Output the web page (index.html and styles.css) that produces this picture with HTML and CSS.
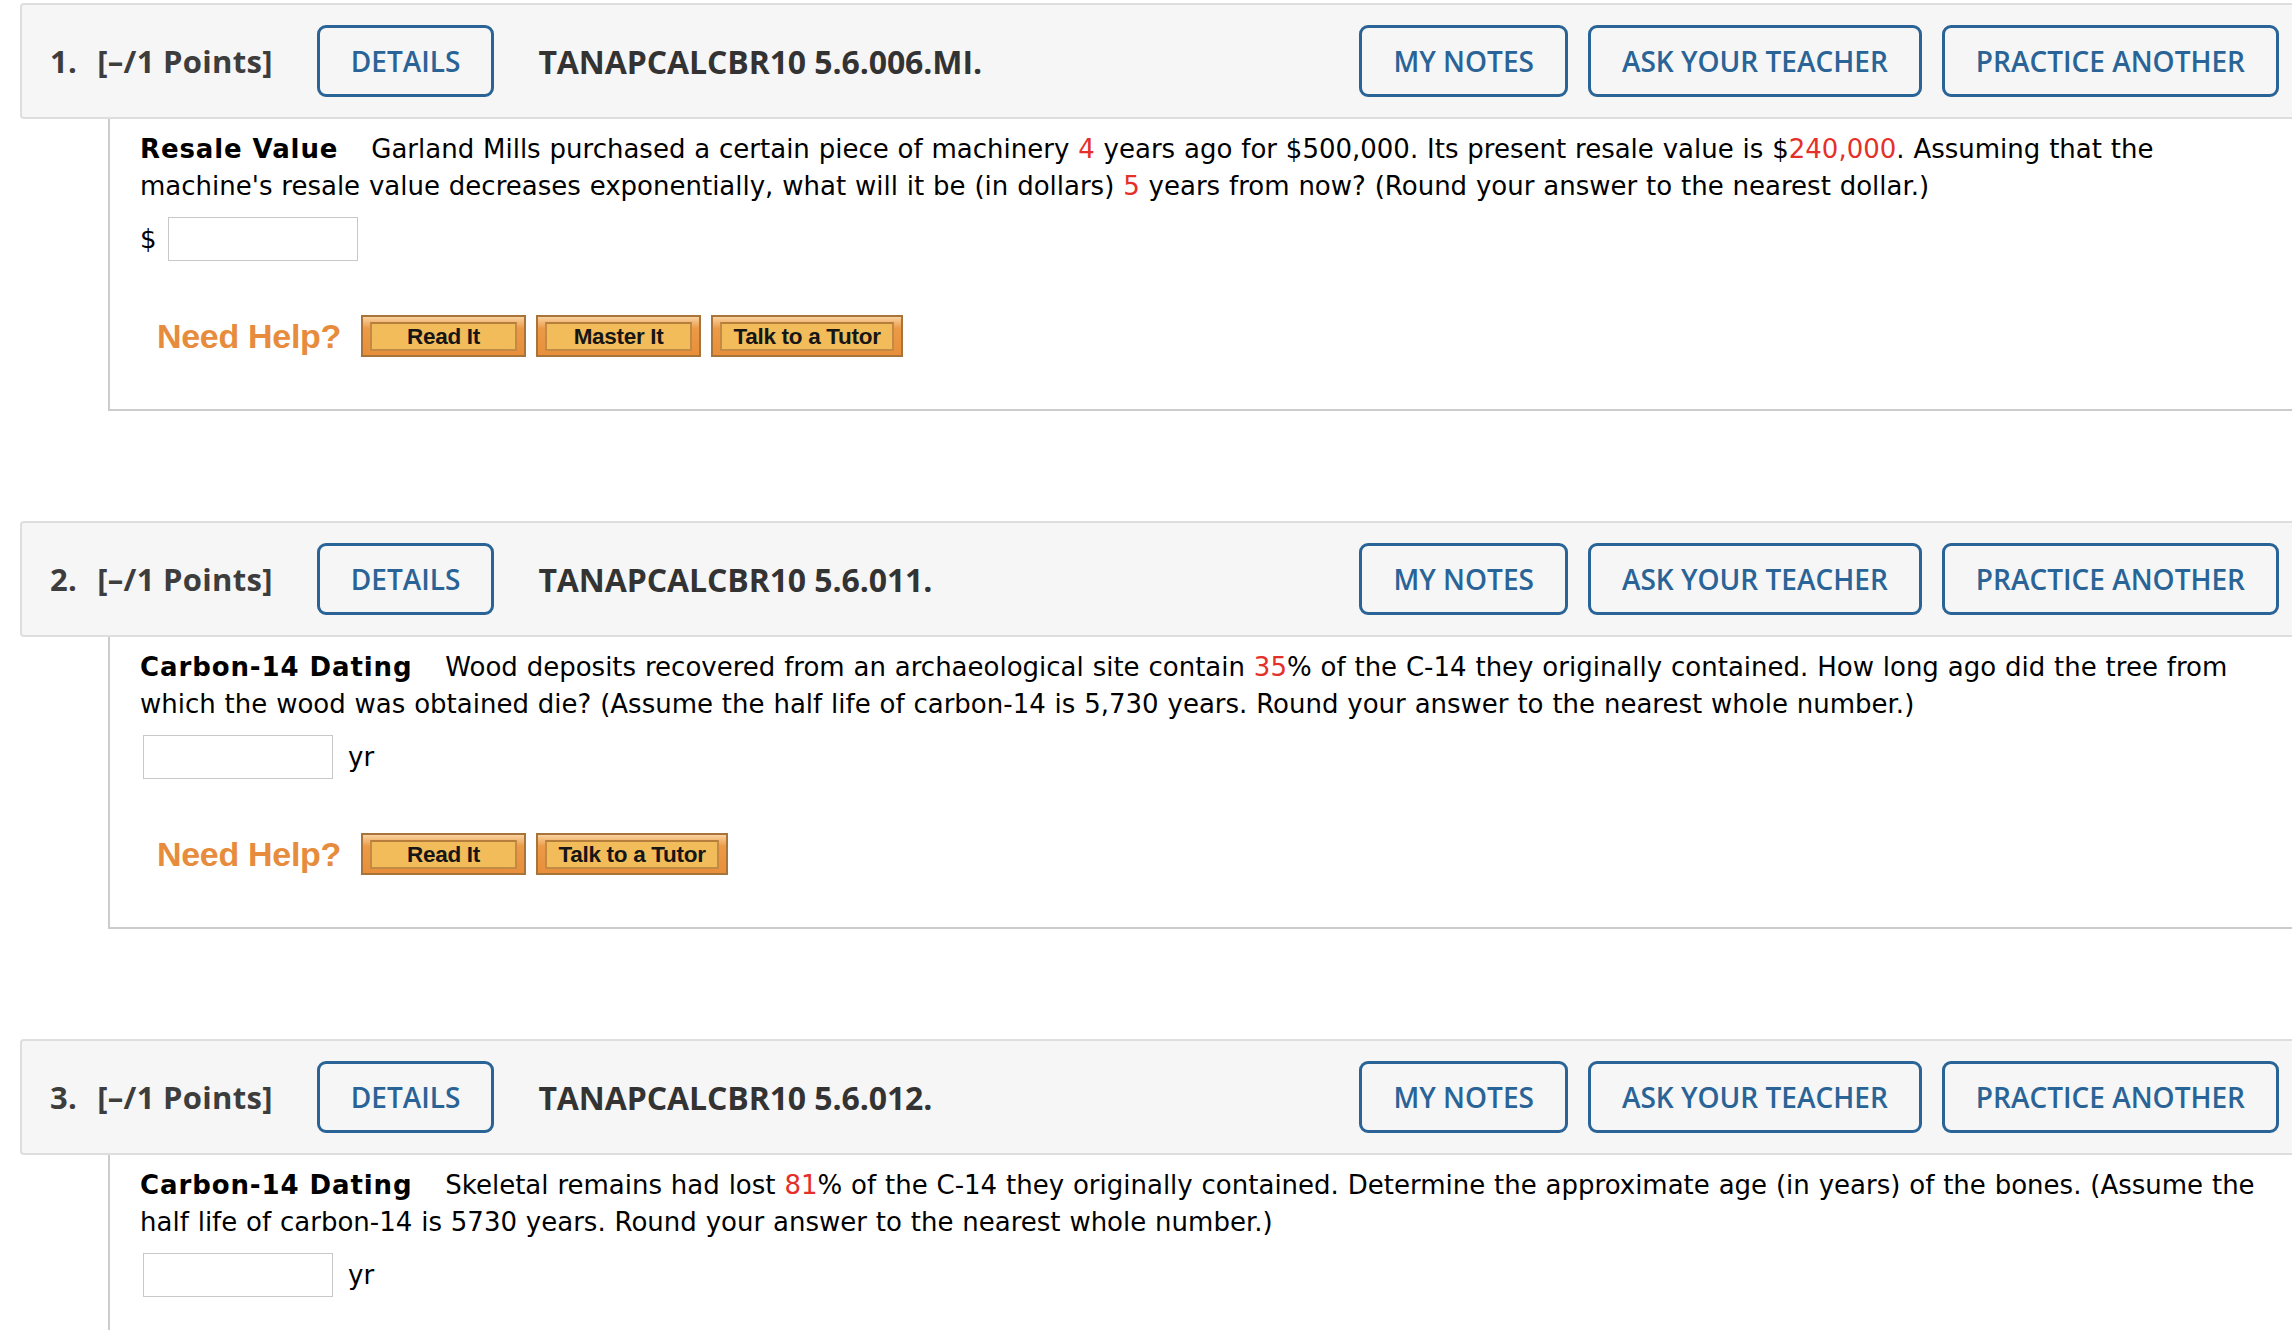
FILE: index.html
```html
<!DOCTYPE html>
<html lang="en">
<head>
<meta charset="utf-8">
<title>Questions</title>
<link rel="stylesheet" href="styles.css">
</head>
<body>
<div class="page">

  <section class="question">
    <div class="q-header">
      <div class="q-label"><span class="q-num">1.</span><span>[–/1 Points]</span></div>
      <button class="q-btn q-details">DETAILS</button>
      <div class="q-title">TANAPCALCBR10 5.6.006.MI.</div>
      <div class="q-actions">
        <button class="q-btn">MY NOTES</button>
        <button class="q-btn">ASK YOUR TEACHER</button>
        <button class="q-btn">PRACTICE ANOTHER</button>
      </div>
    </div>
    <div class="q-body">
      <p class="q-text"><strong class="q-topic">Resale Value</strong> Garland Mills purchased a certain piece of machinery <span class="red">4</span> years ago for $500,000. Its present resale value is $<span class="red">240,000</span>. Assuming that the<br>machine's resale value decreases exponentially, what will it be (in dollars) <span class="red">5</span> years from now? (Round your answer to the nearest dollar.)</p>
      <div class="answer-row"><span class="unit-pre">$</span><input class="answer" type="text"></div>
      <div class="help-row">
        <span class="need-help">Need Help?</span>
        <span class="help-btn"><span class="help-inner">Read It</span></span>
        <span class="help-btn"><span class="help-inner">Master It</span></span>
        <span class="help-btn tutor"><span class="help-inner">Talk to a Tutor</span></span>
      </div>
    </div>
  </section>

  <section class="question">
    <div class="q-header">
      <div class="q-label"><span class="q-num">2.</span><span>[–/1 Points]</span></div>
      <button class="q-btn q-details">DETAILS</button>
      <div class="q-title">TANAPCALCBR10 5.6.011.</div>
      <div class="q-actions">
        <button class="q-btn">MY NOTES</button>
        <button class="q-btn">ASK YOUR TEACHER</button>
        <button class="q-btn">PRACTICE ANOTHER</button>
      </div>
    </div>
    <div class="q-body">
      <p class="q-text"><strong class="q-topic">Carbon-14 Dating</strong> Wood deposits recovered from an archaeological site contain <span class="red">35</span>% of the C-14 they originally contained. How long ago did the tree from<br>which the wood was obtained die? (Assume the half life of carbon-14 is 5,730 years. Round your answer to the nearest whole number.)</p>
      <div class="answer-row indent"><input class="answer" type="text"><span class="unit-post">yr</span></div>
      <div class="help-row">
        <span class="need-help">Need Help?</span>
        <span class="help-btn"><span class="help-inner">Read It</span></span>
        <span class="help-btn tutor"><span class="help-inner">Talk to a Tutor</span></span>
      </div>
    </div>
  </section>

  <section class="question">
    <div class="q-header">
      <div class="q-label"><span class="q-num">3.</span><span>[–/1 Points]</span></div>
      <button class="q-btn q-details">DETAILS</button>
      <div class="q-title">TANAPCALCBR10 5.6.012.</div>
      <div class="q-actions">
        <button class="q-btn">MY NOTES</button>
        <button class="q-btn">ASK YOUR TEACHER</button>
        <button class="q-btn">PRACTICE ANOTHER</button>
      </div>
    </div>
    <div class="q-body">
      <p class="q-text"><strong class="q-topic">Carbon-14 Dating</strong> Skeletal remains had lost <span class="red">81</span>% of the C-14 they originally contained. Determine the approximate age (in years) of the bones. (Assume the<br>half life of carbon-14 is 5730 years. Round your answer to the nearest whole number.)</p>
      <div class="answer-row indent"><input class="answer" type="text"><span class="unit-post">yr</span></div>
    </div>
  </section>

</div>
</body>
</html>
```

FILE: styles.css
```css
html, body {
  margin: 0;
  padding: 0;
  background: #ffffff;
}
body {
  overflow: hidden;
}
.page {
  padding: 3px 0 0 20px;
  width: 2290px;
}
.question {
  margin-bottom: 110px;
}
.q-header {
  display: flex;
  align-items: center;
  box-sizing: border-box;
  height: 116px;
  padding: 0 29px 0 28px;
  background: #f6f6f6;
  border: 2px solid #dedede;
  border-radius: 4px;
  font-family: "Open Sans", "Liberation Sans", sans-serif;
}
.q-label {
  font-size: 31px;
  font-weight: 700;
  color: #3d3d3d;
  display: flex;
  align-items: center;
  letter-spacing: 0.3px;
}
.q-num {
  margin-right: 20px;
}
.q-btn {
  display: inline-flex;
  align-items: center;
  justify-content: center;
  box-sizing: border-box;
  height: 72px;
  padding: 0 31px;
  border: 3px solid #2a6496;
  border-radius: 9px;
  background: transparent;
  color: #2a6496;
  font-family: "Open Sans", "Liberation Sans", sans-serif;
  font-size: 28px;
  font-weight: 600;
  letter-spacing: 0;
  cursor: pointer;
}
.q-details {
  margin-left: 44px;
}
.q-title {
  margin-left: 44px;
  font-size: 32px;
  font-weight: 700;
  color: #333333;
  letter-spacing: -0.1px;
}
.q-actions {
  margin-left: auto;
  display: flex;
  gap: 20px;
}
.q-body {
  margin-left: 88px;
  border-left: 2px solid #cccccc;
  border-bottom: 2px solid #cccccc;
  padding: 12px 30px 52px 30px;
  font-family: Verdana, "DejaVu Sans", sans-serif;
  font-size: 26px;
  color: #000000;
}
.q-text {
  margin: 0;
  line-height: 37px;
  height: 74px;
  word-spacing: 0.6px;
}
.q-topic {
  font-weight: 700;
  margin-right: 24px;
  letter-spacing: 0.9px;
  word-spacing: 0;
}
.red {
  color: #e5302a;
}
.answer-row {
  display: flex;
  align-items: center;
  margin-top: 12px;
  height: 44px;
}
.answer-row.indent {
  padding-left: 3px;
}
.unit-pre {
  margin-right: 11px;
}
.unit-post {
  margin-left: 15px;
}
.answer {
  box-sizing: border-box;
  width: 190px;
  height: 44px;
  border: 1px solid #c8c8c8;
  background: #fff;
  margin: 0;
  padding: 0;
}
.help-row {
  display: flex;
  align-items: center;
  margin-top: 54px;
  padding-left: 17px;
  font-family: "Liberation Sans", Arial, sans-serif;
}
.need-help {
  font-size: 34px;
  font-weight: 700;
  color: #e68c3c;
  margin-right: 20px;
  letter-spacing: -0.3px;
}
.help-btn {
  display: inline-flex;
  box-sizing: border-box;
  width: 165px;
  height: 42px;
  padding: 5px 7px 4px 7px;
  margin-right: 10px;
  border: 2px solid #a8743a;
  background: linear-gradient(#f8d2a0 0, #ec9a46 30%, #e88f3a 100%);
}
.help-btn.tutor {
  width: 192px;
}
.help-inner {
  flex: 1;
  display: flex;
  align-items: center;
  justify-content: center;
  border: 2px solid #c28a45;
  border-top-color: #b67e3c;
  background: #f2bc5a;
  font-size: 22.5px;
  font-weight: 700;
  color: #161616;
  letter-spacing: -0.3px;
}
```
